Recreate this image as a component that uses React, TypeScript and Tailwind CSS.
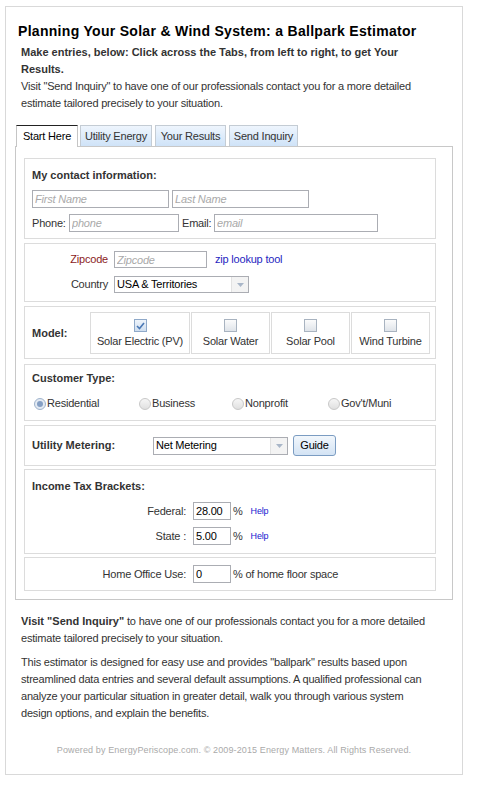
import React from "react"

// Plain text field with the old IE-style gray border
function TextBox({ cls, placeholder, value }: { cls: string; placeholder?: string; value?: string }) {
  return (
    <input
      readOnly
      className={`${cls} border border-[#abadb3] bg-white pl-[2px] text-[11px] leading-[15px] text-black outline-none placeholder:italic placeholder:text-[#a9a9a9]`}
      placeholder={placeholder}
      defaultValue={value}
    />
  )
}

function SelectBox({ cls, value }: { cls: string; value: string }) {
  return (
    <div className={`${cls} flex border border-[#abadb3] bg-white`}>
      <span className="flex flex-1 items-center pl-[2px] text-[11px] text-black">{value}</span>
      <span className="flex w-[17px] items-center justify-center border-l border-[#e2e2e2] bg-[#f3f3f3]">
        <svg width="7" height="4" viewBox="0 0 7 4">
          <path d="M0 0h7L3.5 4z" fill="#a9b6c8" />
        </svg>
      </span>
    </div>
  )
}

function CheckBox({ checked }: { checked?: boolean }) {
  return (
    <span
      className={`flex h-[13px] w-[13px] items-center justify-center border ${
        checked ? "border-[#8fa9c9] bg-linear-to-b from-[#eef4fb] to-[#cfdeef]" : "border-[#a8b3c0] bg-linear-to-b from-[#fbfbfb] to-[#dfe4ea]"
      }`}
    >
      {checked && (
        <svg width="9" height="8" viewBox="0 0 9 8">
          <path d="M1 4l2.5 2.5L8 1" stroke="#4a78b5" strokeWidth="1.6" fill="none" />
        </svg>
      )}
    </span>
  )
}

function Radio({ cls, label, checked }: { cls: string; label: string; checked?: boolean }) {
  return (
    <div className={`${cls} flex items-center`}>
      <span
        className={`flex h-[12px] w-[12px] items-center justify-center rounded-full border ${
          checked ? "border-[#9fb3cc] bg-[#e3eaf3]" : "border-[#c8c8c8] bg-linear-to-b from-[#f6f6f6] to-[#e0e0e0]"
        }`}
      >
        {checked && <span className="h-[6px] w-[6px] rounded-full bg-[#849fc4]" />}
      </span>
      <span className="ml-[1px]">{label}</span>
    </div>
  )
}

function ModelBox({ cls, label, checked }: { cls: string; label: string; checked?: boolean }) {
  return (
    <div className={`${cls} flex h-[42px] flex-col items-center border border-[#dcdcdc] pt-[6px]`}>
      <CheckBox checked={checked} />
      <span className="mt-[3px] leading-[13px] whitespace-nowrap">{label}</span>
    </div>
  )
}

export default function App() {
  return (
    <div className="min-h-[785px] bg-white pt-[6px] font-['Liberation_Sans',Arial,sans-serif] text-[11px] leading-[17px] tracking-[-0.2px] text-[#333]">
      <div className="ml-[5px] w-[458px] border border-[#d9d9d9] px-[9px] pt-[15px] pb-[18px]">
        <h1 className="pl-[3px] text-[14px] leading-[18px] font-bold tracking-[0.3px] text-black">
          Planning Your Solar &amp; Wind System: a Ballpark Estimator
        </h1>
        <div className="mt-[4px] pr-[22px] pl-[6px]">
          <p className="font-bold tracking-normal">Make entries, below: Click across the Tabs, from left to right, to get Your Results.</p>
          <p>Visit "Send Inquiry" to have one of our professionals contact you for a more detailed estimate tailored precisely to your situation.</p>
        </div>

        {/* tabs */}
        <div className="mt-[13px] flex h-[21px] items-start pl-[1px]">
          <div className="relative z-10 flex h-[22px] w-[62px] items-center justify-center border-x border-t border-[#c5c5c5] border-t-[#222] bg-white text-black">
            Start Here
          </div>
          <div className="ml-[2px] flex h-[21px] w-[72px] items-center justify-center border border-b-0 border-[#c4ccd4] bg-linear-to-b from-[#eef5fd] to-[#cfe3f8]">
            Utility Energy
          </div>
          <div className="ml-[3px] flex h-[21px] w-[71px] items-center justify-center border border-b-0 border-[#c4ccd4] bg-linear-to-b from-[#eef5fd] to-[#cfe3f8]">
            Your Results
          </div>
          <div className="ml-[3px] flex h-[21px] w-[69px] items-center justify-center border border-b-0 border-[#c4ccd4] bg-linear-to-b from-[#eef5fd] to-[#cfe3f8]">
            Send Inquiry
          </div>
        </div>

        <div className="border border-[#c8c8c8] pt-[11px] pr-[16px] pb-[8px] pl-[8px]">
          {/* contact */}
          <div className="h-[81px] border border-[#dcdcdc] pt-[8px] pl-[7px]">
            <div className="font-bold tracking-normal">My contact information:</div>
            <div className="mt-[6px] flex">
              <TextBox cls="h-[18px] w-[137px]" placeholder="First Name" />
              <TextBox cls="ml-[3px] h-[18px] w-[137px]" placeholder="Last Name" />
            </div>
            <div className="mt-[6px] flex items-center">
              <span className="w-[37px]">Phone:</span>
              <TextBox cls="h-[18px] w-[110px]" placeholder="phone" />
              <span className="ml-[3px] w-[32px]">Email:</span>
              <TextBox cls="h-[18px] w-[164px]" placeholder="email" />
            </div>
          </div>

          {/* location */}
          <div className="mt-[4px] h-[59px] border border-[#dcdcdc] pt-[7px]">
            <div className="flex h-[17px] items-center">
              <span className="w-[83px] text-right text-[#8b1c1c]">Zipcode</span>
              <TextBox cls="ml-[6px] h-[17px] w-[93px]" placeholder="Zipcode" />
              <span className="ml-[8px] text-[#1f1fbf]">zip lookup tool</span>
            </div>
            <div className="mt-[8px] flex h-[17px] items-center">
              <span className="w-[83px] text-right">Country</span>
              <SelectBox cls="ml-[6px] h-[17px] w-[135px]" value="USA & Territories" />
            </div>
          </div>

          {/* model */}
          <div className="mt-[4px] h-[53px] border border-[#dcdcdc] pt-[5px] pl-[7px]">
            <div className="flex h-[42px] items-center">
              <span className="w-[58px] font-bold tracking-normal">Model:</span>
              <ModelBox cls="w-[100px]" label="Solar Electric (PV)" checked />
              <ModelBox cls="ml-[1px] w-[79px]" label="Solar Water" />
              <ModelBox cls="ml-[1px] w-[79px]" label="Solar Pool" />
              <ModelBox cls="ml-[1px] w-[79px]" label="Wind Turbine" />
            </div>
          </div>

          {/* customer type */}
          <div className="mt-[5px] h-[57px] border border-[#dcdcdc] pt-[5px] pl-[7px]">
            <div className="font-bold tracking-normal">Customer Type:</div>
            <div className="mt-[8px] flex h-[17px] items-center pl-[2px]">
              <Radio cls="w-[105px]" label="Residential" checked />
              <Radio cls="w-[93px]" label="Business" />
              <Radio cls="w-[96px]" label="Nonprofit" />
              <Radio cls="" label="Gov't/Muni" />
            </div>
          </div>

          {/* metering */}
          <div className="mt-[4px] flex h-[41px] items-center border border-[#dcdcdc] pl-[7px]">
            <span className="w-[121px] font-bold tracking-normal">Utility Metering:</span>
            <SelectBox cls="h-[18px] w-[135px]" value="Net Metering" />
            <button className="ml-[5px] h-[21px] w-[43px] rounded-[3px] border border-[#7b9cc2] bg-linear-to-b from-[#f2f7fc] to-[#d3e3f4] text-[11px] text-black">
              Guide
            </button>
          </div>

          {/* tax */}
          <div className="mt-[3px] h-[85px] border border-[#dcdcdc] pt-[8px]">
            <div className="pl-[7px] font-bold tracking-normal">Income Tax Brackets:</div>
            <div className="mt-[7px] flex h-[18px] items-center">
              <span className="w-[161px] text-right">Federal:</span>
              <TextBox cls="ml-[7px] h-[18px] w-[38px]" value="28.00" />
              <span className="ml-[2px]">%</span>
              <span className="ml-[8px] text-[9px] text-[#2020d0]">Help</span>
            </div>
            <div className="mt-[7px] flex h-[18px] items-center">
              <span className="w-[161px] text-right">State :</span>
              <TextBox cls="ml-[7px] h-[18px] w-[38px]" value="5.00" />
              <span className="ml-[2px]">%</span>
              <span className="ml-[8px] text-[9px] text-[#2020d0]">Help</span>
            </div>
          </div>

          {/* home office */}
          <div className="mt-[3px] flex h-[34px] items-center border border-[#dcdcdc]">
            <span className="w-[161px] text-right">Home Office Use:</span>
            <TextBox cls="ml-[7px] h-[18px] w-[38px]" value="0" />
            <span className="ml-[2px]">% of home floor space</span>
          </div>
        </div>

        <div className="mt-[13px] pr-[22px] pl-[6px]">
          <p>
            <b className="tracking-normal">Visit "Send Inquiry"</b> to have one of our professionals contact you for a more detailed estimate tailored
            precisely to your situation.
          </p>
          <p className="mt-[7px]">
            This estimator is designed for easy use and provides "ballpark" results based upon streamlined data entries and several default
            assumptions. A qualified professional can analyze your particular situation in greater detail, walk you through various system design
            options, and explain the benefits.
          </p>
        </div>

        <div className="mt-[22px] text-center text-[9px] leading-[12px] tracking-[0.12px] text-[#aaa]">
          Powered by EnergyPeriscope.com. © 2009-2015 Energy Matters. All Rights Reserved.
        </div>
      </div>
    </div>
  )
}
